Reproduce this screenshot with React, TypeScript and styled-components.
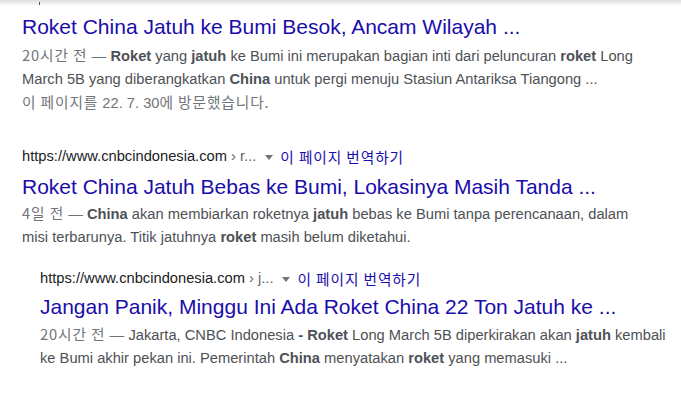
import React from "react";
import styled, { createGlobalStyle } from "styled-components";

const Global = createGlobalStyle`
  html, body { margin: 0; padding: 0; background: #fff; }
  body { font-family: "Liberation Sans", Arial, "Noto Sans CJK KR", sans-serif; }
`;

const Page = styled.div`
  width: 681px;
  height: 400px;
  overflow: hidden;
  background: #fff;
`;

const TopShadow = styled.div`
  position: relative;
  height: 6px;
  background: linear-gradient(to bottom, rgba(0,0,0,0.13), rgba(0,0,0,0));
  &::after {
    content: "";
    position: absolute;
    left: 39px;
    top: 2px;
    width: 1px;
    height: 3px;
    background: #555;
  }
`;

const List = styled.div`
  display: flex;
  flex-direction: column;
  padding-left: 22px;
`;

const Result = styled.div<{ $indent?: number; $top: number }>`
  width: 632px;
  margin-left: ${(p) => p.$indent ?? 0}px;
  margin-top: ${(p) => p.$top}px;
  display: flex;
  flex-direction: column;
`;

const UrlLine = styled.div`
  display: flex;
  align-items: center;
  font-size: 14.7px;
  line-height: 23px;
  color: #202124;
  white-space: nowrap;
`;

const Crumb = styled.span`
  color: #5f6368;
`;

const Caret = styled.span`
  display: inline-block;
  width: 0;
  height: 0;
  border-left: 4px solid transparent;
  border-right: 4px solid transparent;
  border-top: 5px solid #70757a;
  margin: 1px 7px 0 9px;
`;

const Kr = styled.span`
  font-family: "Noto Sans CJK KR", "Liberation Sans", sans-serif;
  letter-spacing: 0.9px;
`;

const Translate = styled(Kr)`
  color: #1a0dab;
  font-size: 14.7px;
`;

const Title = styled.div<{ $gap?: number }>`
  font-size: 21px;
  line-height: 27px;
  color: #1a0dab;
  margin-top: ${(p) => p.$gap ?? 0}px;
  white-space: nowrap;
`;

const Snippet = styled.div<{ $gap?: number }>`
  font-size: 14.7px;
  line-height: 23px;
  color: #4d5156;
  margin-top: ${(p) => p.$gap ?? 0}px;
  b { font-weight: bold; color: #4d5156; }
`;

const DateText = styled.span`
  color: #70757a;
`;

const Visited = styled.div`
  font-size: 14.7px;
  line-height: 23px;
  margin-top: -1px;
  color: #70757a;
`;

export default function App() {
  return (
    <Page>
      <Global />
      <TopShadow />
      <List>
        <Result $top={7}>
          <Title>Roket China Jatuh ke Bumi Besok, Ancam Wilayah ...</Title>
          <Snippet $gap={3}>
            <DateText><Kr>20시간 전</Kr> — </DateText>
            <b>Roket</b> yang <b>jatuh</b> ke Bumi ini merupakan bagian inti dari peluncuran <b>roket</b> Long March 5B yang diberangkatkan <b>China</b> untuk pergi menuju Stasiun Antariksa Tiangong ...
          </Snippet>
          <Visited><Kr>이 페이지를</Kr> 22. 7. 30<Kr>에 방문했습니다.</Kr></Visited>
        </Result>
        <Result $top={30}>
          <UrlLine>
            https://www.cnbcindonesia.com<Crumb>&nbsp;› r...</Crumb>
            <Caret />
            <Translate>이 페이지 번역하기</Translate>
          </UrlLine>
          <Title $gap={5}>Roket China Jatuh Bebas ke Bumi, Lokasinya Masih Tanda ...</Title>
          <Snippet $gap={1}>
            <DateText><Kr>4일 전</Kr> — </DateText>
            <b>China</b> akan membiarkan roketnya <b>jatuh</b> bebas ke Bumi tanpa perencanaan, dalam misi terbarunya. Titik jatuhnya <b>roket</b> masih belum diketahui.
          </Snippet>
        </Result>
        <Result $indent={18} $top={18}>
          <UrlLine>
            https://www.cnbcindonesia.com<Crumb>&nbsp;› j...</Crumb>
            <Caret />
            <Translate>이 페이지 번역하기</Translate>
          </UrlLine>
          <Title $gap={3}>Jangan Panik, Minggu Ini Ada Roket China 22 Ton Jatuh ke ...</Title>
          <Snippet $gap={2}>
            <DateText><Kr>20시간 전</Kr> — </DateText>
            Jakarta, CNBC Indonesia <b>-</b> <b>Roket</b> Long March 5B diperkirakan akan <b>jatuh</b> kembali ke Bumi akhir pekan ini. Pemerintah <b>China</b> menyatakan <b>roket</b> yang memasuki ...
          </Snippet>
        </Result>
      </List>
    </Page>
  );
}
